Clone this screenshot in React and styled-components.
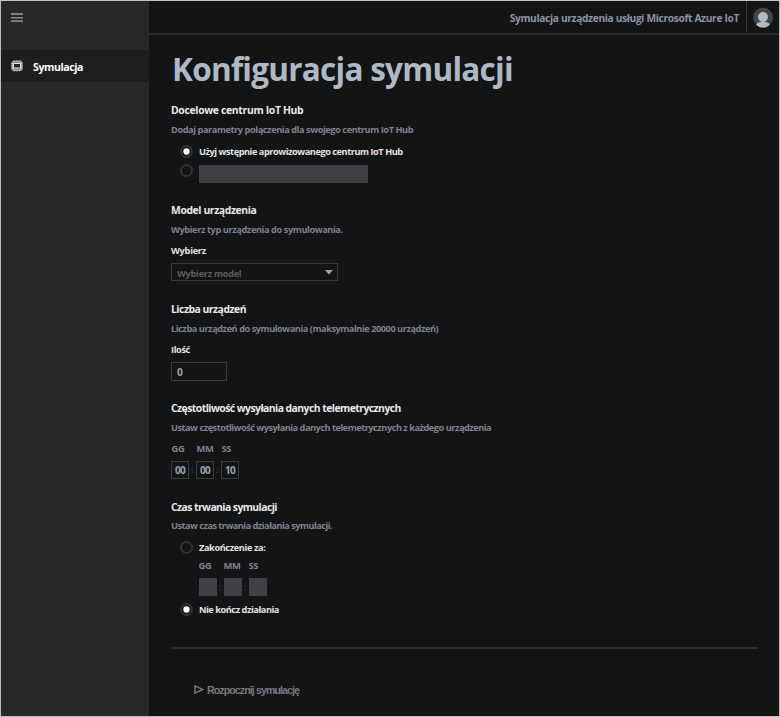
import React from 'react';
import styled, { createGlobalStyle } from 'styled-components';

const GlobalStyle = createGlobalStyle`
  * { box-sizing: border-box; }
  body {
    margin: 0;
    background: #131416;
    font-family: "Open Sans", "Noto Sans", sans-serif;
    font-weight: 700;
  }
`;

const Frame = styled.div`
  display: flex;
  width: 780px;
  height: 717px;
  border: 1px solid #babdbd;
  border-top-color: #c2c5c5;
  background: #131416;
  overflow: hidden;
`;

const Sidebar = styled.nav`
  flex: 0 0 148px;
  background: #262829;
`;

const MenuButton = styled.div`
  display: flex;
  height: 49px;
  padding: 11px 0 0 10px;
`;

const NavItem = styled.div`
  display: flex;
  align-items: center;
  height: 32px;
  padding-left: 10px;
  gap: 10px;
  background: #1c1e1f;
  color: #fff;
  font-size: 10.6px;
  letter-spacing: -0.44px;
  line-height: 32px;
`;

const NavLabel = styled.span`
  padding-top: 2px;
`;

const Main = styled.main`
  flex: 1;
  min-width: 0;
`;

const TopBar = styled.header`
  display: flex;
  justify-content: flex-end;
  height: 34px;
  border-bottom: 2px solid #292b2c;
`;

const ProductName = styled.div`
  padding: 2px 7px 0 0;
  color: #8b94a1;
  font-size: 10.2px;
  letter-spacing: -0.332px;
  line-height: 31px;
`;

const AvatarCell = styled.div`
  width: 33px;
  padding: 6px 0 0 6px;
  border-left: 1px solid #36393b;
`;

const Content = styled.div`
  padding: 0 21px 0 22px;
`;

const Title = styled.h1`
  height: 65px;
  margin: 0;
  padding: 12px 0 0 1px;
  color: #afb9c5;
  font-size: 31.5px;
  font-weight: 700;
  letter-spacing: -0.74px;
  line-height: 44px;
`;

const Section = styled.section`
  height: ${(p) => p.$height}px;
`;

const Heading = styled.h2`
  margin: 0 0 ${(p) => p.$gap ?? 1}px;
  color: #e9e8e6;
  font-size: 10.4px;
  font-weight: 700;
  letter-spacing: ${(p) => p.$track}px;
  line-height: 20px;
  white-space: nowrap;
`;

const Text = styled.div`
  color: #7f818e;
  font-size: 9.2px;
  letter-spacing: ${(p) => p.$track}px;
  line-height: 18px;
  white-space: nowrap;
`;

const Label = styled(Text)`
  color: #e3e2e0;
`;

const FieldLabel = styled(Label)`
  margin: 3px 0 3px;
`;

const RadioRow = styled.div`
  display: flex;
  align-items: flex-start;
  gap: 6px;
  margin-top: ${(p) => p.$top}px;
  padding-left: 9px;
`;

const RadioDot = styled.span`
  display: grid;
  place-items: center;
  flex: 0 0 13px;
  height: 13px;
  margin-top: ${(p) => p.$drop || 0}px;
  border: 2px solid #303234;
  border-radius: 50%;

  &::after {
    content: "";
    width: 7px;
    height: 7px;
    border-radius: 50%;
    background: ${(p) => (p.$checked ? '#fff' : 'transparent')};
    transform: scale(0.9);
  }
`;

const DisabledInput = styled.div`
  width: 169px;
  height: 18px;
  background: #3f4146;
`;

const Select = styled.div`
  display: flex;
  align-items: center;
  justify-content: space-between;
  width: 167px;
  height: 18px;
  padding: 2px 4px 0 5px;
  border: 1px solid #3a3c3e;
  color: #5c5e61;
  font-size: 9.2px;
  letter-spacing: -0.273px;
`;

const NumberInput = styled.div`
  width: 56px;
  height: 19px;
  padding: 0 5px;
  border: 1px solid #3a3c3e;
  color: #96a3b5;
  font-size: 10.2px;
  line-height: 18px;
`;

const TimeLabels = styled.div`
  display: grid;
  grid-template-columns: 25px 25px 20px;
  margin-top: ${(p) => p.$top || 0}px;
  padding-left: ${(p) => p.$indent}px;
  color: #7f818e;
  font-size: 9.4px;
  letter-spacing: -0.3px;
  line-height: 18px;
`;

const TimeFields = styled.div`
  display: flex;
  align-items: center;
  gap: 2px;
  margin: 3px 0 0 ${(p) => p.$indent || 0}px;
  color: #3c3e42;
  font-size: 9px;
`;

const TimeBox = styled.span`
  width: 18px;
  height: 18px;
  border: 1px solid ${(p) => (p.$disabled ? '#3f4146' : '#3a3c3e')};
  background: ${(p) => (p.$disabled ? '#3f4146' : 'transparent')};
  color: #96a3b5;
  font-size: 10px;
  letter-spacing: -0.6px;
  line-height: 17px;
  text-align: center;
`;

const Colon = styled.span`
  width: 3px;
  line-height: 18px;
`;

const Divider = styled.hr`
  height: 2px;
  margin: 0;
  border: 0;
  background: #2a2c2d;
`;

const StartButton = styled.div`
  display: flex;
  align-items: center;
  gap: 3px;
  margin: 32px 0 0 23px;
  color: #747a80;
  font-family: "Liberation Sans", sans-serif;
  font-size: 10.6px;
  letter-spacing: -0.9px;
  line-height: 18px;

  svg {
    margin-bottom: 1px;
  }
`;

function MenuIcon() {
  return (
    <svg width="13" height="11" viewBox="0 0 13 11" fill="#7c848a">
      <rect x="0" y="1" width="12" height="2" />
      <rect x="0" y="5" width="12" height="1.6" />
      <rect x="0" y="8.2" width="12" height="1.8" />
    </svg>
  );
}

function ChipIcon() {
  return (
    <svg width="12" height="12" viewBox="0 0 12 12" fill="none">
      <path d="M3.3 0.3v11.2M6 0.3v11.2M8.7 0.3v11.2M0 3.5h12M0 6h12M0 8.5h12" strokeWidth="1.3" stroke="#a0a3a5" />
      <rect x="1.3" y="1.5" width="9.4" height="8.8" rx="1.5" fill="#777a7c" stroke="#a9abac" strokeWidth="1.4" />
      <rect x="2.5" y="3.5" width="7" height="4.5" fill="#202223" stroke="#e4e5e6" strokeWidth="1" />
    </svg>
  );
}

function Avatar() {
  return (
    <svg width="20" height="21" viewBox="0 0 20 21">
      <circle cx="10" cy="10.5" r="10" fill="#424549" />
      <ellipse cx="10" cy="10" rx="5" ry="5" fill="#b0bac3" />
      <path d="M8 13h4v2c2 .3 4.200 .8 4.800 2.700-1.900 2-4.300 2.800-6.800 2.800s-4.900-.8-6.800-2.800c.6-1.900 2.800-2.400 4.800-2.700z" fill="#b0bac3" />
    </svg>
  );
}

function CaretIcon() {
  return (
    <svg width="8" height="8" viewBox="0 0 8 8">
      <path d="M0 1h8L4 5.4z" fill="#a2a49f" />
    </svg>
  );
}

function PlayIcon() {
  return (
    <svg width="10" height="9" viewBox="0 0 10 9">
      <path d="M1 0.9v7.200L8.800 4.500z" fill="none" stroke="#747c81" strokeWidth="1.4" />
    </svg>
  );
}

function TimeGroup({ values, disabled, indent = 0 }) {
  return (
    <TimeFields $indent={indent}>
      {values.map((value, i) => (
        <React.Fragment key={i}>
          {i > 0 && <Colon>:</Colon>}
          <TimeBox $disabled={disabled}>{value}</TimeBox>
        </React.Fragment>
      ))}
    </TimeFields>
  );
}

function TimeUnits({ indent, top }) {
  return (
    <TimeLabels $indent={indent} $top={top}>
      <span>GG</span>
      <span>MM</span>
      <span>SS</span>
    </TimeLabels>
  );
}

export default function App() {
  return (
    <Frame>
      <GlobalStyle />
      <Sidebar>
        <MenuButton><MenuIcon /></MenuButton>
        <NavItem><ChipIcon /><NavLabel>Symulacja</NavLabel></NavItem>
      </Sidebar>
      <Main>
        <TopBar>
          <ProductName>Symulacja urządzenia usługi Microsoft Azure IoT</ProductName>
          <AvatarCell><Avatar /></AvatarCell>
        </TopBar>
        <Content>
          <Title>Konfiguracja symulacji</Title>
          <Section $height={100}>
            <Heading $track={-0.326}>Docelowe centrum IoT Hub</Heading>
            <Text $track={-0.422}>Dodaj parametry połączenia dla swojego centrum IoT Hub</Text>
            <RadioRow $top={4}>
              <RadioDot $checked $drop={2} />
              <Label $track={-0.45}>Użyj wstępnie aprowizowanego centrum IoT Hub</Label>
            </RadioRow>
            <RadioRow $top={4}>
              <RadioDot $drop={-1} />
              <DisabledInput />
            </RadioRow>
          </Section>
          <Section $height={99}>
            <Heading $track={-0.4}>Model urządzenia</Heading>
            <Text $track={-0.402}>Wybierz typ urządzenia do symulowania.</Text>
            <FieldLabel $track={-0.263}>Wybierz</FieldLabel>
            <Select>Wybierz model<CaretIcon /></Select>
          </Section>
          <Section $height={99}>
            <Heading $track={-0.5}>Liczba urządzeń</Heading>
            <Text $track={-0.45}>Liczba urządzeń do symulowania (maksymalnie 20000 urządzeń)</Text>
            <FieldLabel $track={-0.37}>Ilość</FieldLabel>
            <NumberInput>0</NumberInput>
          </Section>
          <Section $height={99}>
            <Heading $track={-0.544}>Częstotliwość wysyłania danych telemetrycznych</Heading>
            <Text $track={-0.482}>Ustaw częstotliwość wysyłania danych telemetrycznych z każdego urządzenia</Text>
            <TimeUnits indent={0.5} top={3} />
            <TimeGroup values={['00', '00', '10']} />
          </Section>
          <Section $height={150}>
            <Heading $track={-0.57} $gap={0}>Czas trwania symulacji</Heading>
            <Text $track={-0.516}>Ustaw czas trwania działania symulacji.</Text>
            <RadioRow $top={4}>
              <RadioDot $drop={2} />
              <Label $track={-0.388}>Zakończenie za:</Label>
            </RadioRow>
            <TimeUnits indent={27.5} />
            <TimeGroup values={['', '', '']} disabled indent={28} />
            <RadioRow $top={5}>
              <RadioDot $checked $drop={2} />
              <Label $track={-0.451}>Nie kończ działania</Label>
            </RadioRow>
          </Section>
          <Divider />
          <StartButton><PlayIcon />Rozpocznij symulację</StartButton>
        </Content>
      </Main>
    </Frame>
  );
}
